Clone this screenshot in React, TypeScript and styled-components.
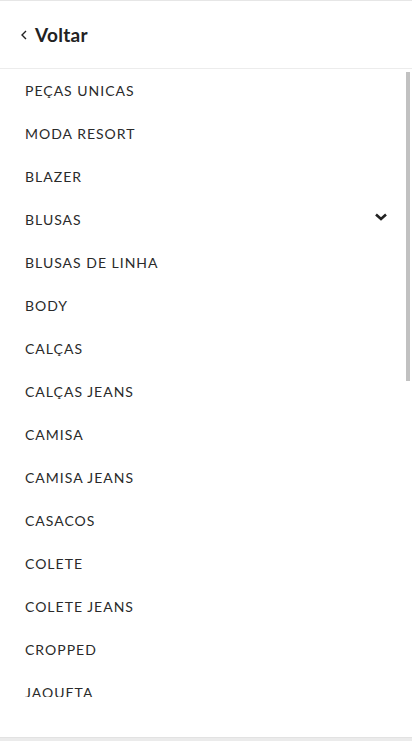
import * as React from 'react';
import styled, { createGlobalStyle } from 'styled-components';

const categories = [
  'PEÇAS UNICAS',
  'MODA RESORT',
  'BLAZER',
  'BLUSAS',
  'BLUSAS DE LINHA',
  'BODY',
  'CALÇAS',
  'CALÇAS JEANS',
  'CAMISA',
  'CAMISA JEANS',
  'CASACOS',
  'COLETE',
  'COLETE JEANS',
  'CROPPED',
  'JAQUETA',
  'JAQUETA JEANS',
  'KIMONO',
  'MACACÃO',
  'MACAQUINHO',
  'REGATA',
  'SAIA',
  'SAIA JEANS',
  'SHORTS',
  'SHORTS JEANS',
  'T-SHIRT',
  'TRICOT',
  'VESTIDO',
  'VESTIDO JEANS',
  'ACESSÓRIOS',
  'SALE',
];

const withSub = ['BLUSAS'];

const GlobalStyle = createGlobalStyle`
  html, body {
    margin: 0;
    padding: 0;
    background: #fff;
    font-family: Lato, 'Open Sans', sans-serif;
  }
  * {
    box-sizing: border-box;
  }
`;

const App = () => {
  return (
    <>
      <GlobalStyle />
      <Drawer>
        <Header>
          <BackButton>
            <svg width="8" height="10" viewBox="0 0 8 10">
              <polyline points="6,1 2,5 6,9" fill="none" stroke="#222" strokeWidth="1.4" />
            </svg>
            <span>Voltar</span>
          </BackButton>
        </Header>

        <ListWrap>
          <List>
            {categories.map(c => (
              <Item key={c}>
                <span>{c}</span>
                {withSub.includes(c) && (
                  <Chevron width="14" height="10" viewBox="0 0 14 10">
                    <polyline points="2,2.5 7,7 12,2.5" fill="none" stroke="#222" strokeWidth="2.6" />
                  </Chevron>
                )}
              </Item>
            ))}
          </List>
          {/* scroll thumb */}
          <Thumb />
        </ListWrap>

        <Footer />
        <BottomBar />
      </Drawer>
    </>
  );
};

const Drawer = styled.div`
  width: 412px;
  height: 741px;
  display: flex;
  flex-direction: column;
  border-top: 1px solid #e6e6e6;
  background: #fff;
`;

const Header = styled.div`
  height: 68px;
  flex-shrink: 0;
  display: flex;
  align-items: center;
  padding: 0 20px;
  border-bottom: 1px solid #ececec;
`;

const BackButton = styled.button`
  display: flex;
  align-items: center;
  gap: 7px;
  background: none;
  border: none;
  padding: 0;
  cursor: pointer;
  color: #222;
  font-family: Lato, sans-serif;
  font-weight: 700;
  font-size: 19px;
  letter-spacing: 0.3px;
`;

const ListWrap = styled.div`
  position: relative;
  height: 628px;
  flex-shrink: 0;
`;

const List = styled.ul`
  list-style: none;
  margin: 0;
  padding: 0;
  height: 100%;
  overflow-y: auto;
  scrollbar-width: none;

  &::-webkit-scrollbar {
    display: none;
  }
`;

const Thumb = styled.div`
  position: absolute;
  top: 3px;
  right: 2px;
  width: 4px;
  height: 309px;
  background: #c1c1c1;
`;

const Item = styled.li`
  height: 43px;
  display: flex;
  align-items: center;
  justify-content: space-between;
  padding: 0 24px 0 25px;
  font-size: 14px;
  letter-spacing: 1px;
  color: #2a2a2a;
  cursor: pointer;
`;

const Chevron = styled.svg`
  display: block;
  margin-top: -5px;
`;

const Footer = styled.div`
  flex: 1;
`;

const BottomBar = styled.div`
  height: 4px;
  flex-shrink: 0;
  background: #ebebeb;
  border-top: 1px solid #e2e2e2;
`;

export default App;
